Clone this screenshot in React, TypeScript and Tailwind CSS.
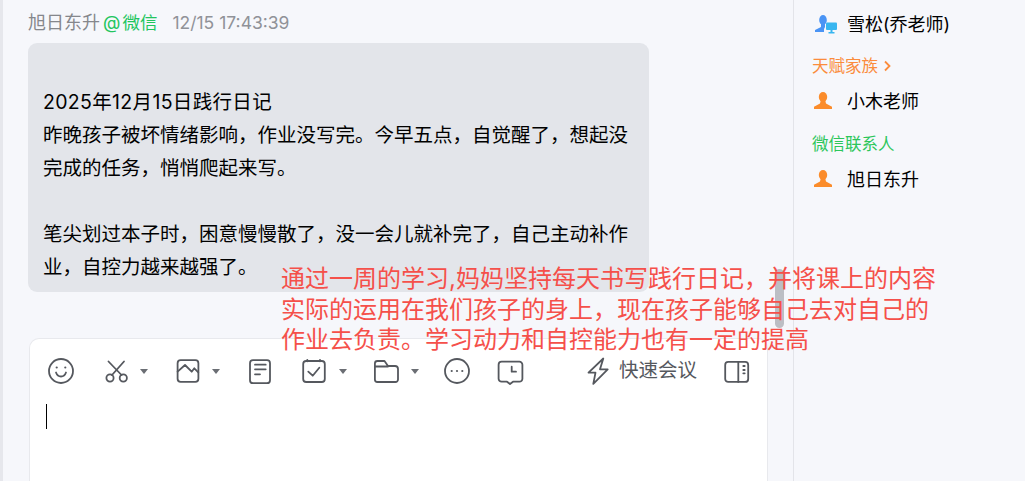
import React from 'react';

const cjk = { fontFamily: '"Inter", "Noto Sans CJK SC", sans-serif' };

const Ico: React.FC<{ children: React.ReactNode; className?: string }> = ({ children, className }) => (
  <svg width={28} height={28} viewBox="0 0 28 28" fill="none" stroke="#55585e" strokeWidth="1.8" strokeLinecap="round" strokeLinejoin="round" className={`shrink-0 ${className ?? ''}`}>
    {children}
  </svg>
);

const Caret: React.FC<{ className: string }> = ({ className }) => (
  <span className={`w-0 h-0 border-x-[4px] border-x-transparent border-t-[5px] border-t-[#6b6e74] ${className}`} />
);

const Person: React.FC = () => (
  <svg width="20" height="20" viewBox="0 0 20 20" fill="#fb8c2b">
    <ellipse cx="10" cy="6" rx="4.2" ry="5" />
    <path d="M7.6 10h4.8l.6 2.6 6 3.2V18H1v-2.2l6-3.2z" />
  </svg>
);

const App: React.FC = () => {
  return (
    <div className="relative w-[1025px] h-[481px] overflow-hidden flex bg-[#f6f7fb] text-black" style={cjk}>
      <div className="w-[3px] bg-[#e6e7ec]" />
      <main className="w-[790px] flex flex-col pl-[25px] pt-[10px]">
        <div className="flex items-center h-[26px] text-[18px] leading-[26px]">
          <span className="text-[#85878c]">旭日东升</span>
          <span className="ml-[3px] text-[#22c55e]">@</span>
          <span className="ml-[2px] text-[17.5px] text-[#22c55e]">微信</span>
          <span className="ml-[15px] text-[17.5px] text-[#909298]">12/15 17:43:39</span>
        </div>
        <div className="mt-[7px] w-[621px] h-[249px] rounded-[9px] bg-[#e3e5ea] px-[15px] pt-[43px] text-[19.5px] leading-[33px]">
          <p className="tracking-[0.33px]">2025年12月15日践行日记</p>
          <p>昨晚孩子被坏情绪影响，作业没写完。今早五点，自觉醒了，想起没完成的任务，悄悄爬起来写。</p>
          <p className="mt-[33px]">笔尖划过本子时，困意慢慢散了，没一会儿就补完了，自己主动补作业，自控力越来越强了。</p>
        </div>
        <div className="mt-[46px] ml-px w-[739px] flex-1 rounded-t-[10px] bg-white border border-b-0 border-[#e8e9ed] pl-[17px] pr-[16px] pt-[18px] min-h-0">
          <div className="flex items-center h-[28px]">
            <Ico>
              <circle cx="14" cy="14" r="12" />
              <path d="M9 15.500c1 2.800 2.800 4 5 4s4-1.200 5-4" />
              <circle cx="9.700" cy="10.500" r="1.100" fill="#55585e" stroke="none" />
              <circle cx="18.300" cy="10.500" r="1.100" fill="#55585e" stroke="none" />
            </Ico>
            <Ico className="ml-[28px]">
              <circle cx="7" cy="21" r="3.600" />
              <circle cx="20.300" cy="21" r="3.600" />
              <path d="M9 18 21 4.500M18.500 18 5.500 4.500" />
            </Ico>
            <Caret className="ml-[9px]" />
            <Ico className="ml-[26px]">
              <rect x="3.600" y="3.200" width="20.800" height="21.600" rx="3" />
              <path d="M3.600 14.700 11 8l6.700 6.700 2.600-3.400 4 4" />
            </Ico>
            <Caret className="ml-[10px]" />
            <Ico className="ml-[27px]">
              <rect x="3" y="3.200" width="20" height="23" rx="3" />
              <path d="M8 7.700h10.700M8 12.300h10.700M8 17.300h5" />
            </Ico>
            <Ico className="ml-[25px]">
              <rect x="3.200" y="4" width="21.600" height="21" rx="3" />
              <path d="M7.300 2.800v1.500M20 2.800v1.500M8.300 14.700l4.400 4 6.600-8" />
            </Ico>
            <Caret className="ml-[11px]" />
            <Ico className="ml-[25px]">
              <path d="M2.900 22.500V6.500A2.500 2.500 0 0 1 5.400 4h7.100l3.500 5h7a3 3 0 0 1 3 3v10.500a2.500 2.500 0 0 1-2.500 2.500H5.400a2.500 2.500 0 0 1-2.500-2.500zM2.900 9.500H16" />
            </Ico>
            <Caret className="ml-[11px]" />
            <Ico className="ml-[24px]">
              <circle cx="14" cy="14" r="12" />
              <circle cx="8.700" cy="14" r="1.100" fill="#55585e" stroke="none" />
              <circle cx="14" cy="14" r="1.100" fill="#55585e" stroke="none" />
              <circle cx="19.300" cy="14" r="1.100" fill="#55585e" stroke="none" />
            </Ico>
            <Ico className="ml-[25px]">
              <path d="M5.600 4.700h17.800a3 3 0 0 1 3 3v14a3 3 0 0 1-3 3H17l-3 2.300-3-2.300H5.600a3 3 0 0 1-3-3v-14a3 3 0 0 1 3-3z" />
              <path d="M15.700 9.700v5H20" />
            </Ico>
            <Ico className="ml-auto">
              <path d="M19.300 1.500 4.500 15.700h7L9.300 26.800l14.400-14.500h-7.700z" />
            </Ico>
            <span className="ml-[7px] text-[19.5px] text-[#55585e] whitespace-nowrap">快速会议</span>
            <Ico className="ml-[26px]">
              <rect x="2.200" y="4.900" width="23" height="20" rx="3" />
              <path d="M15.300 4.900v20M20.300 9h1.400M20.300 13h1.400M20.300 16.300h1.400" />
            </Ico>
          </div>
          <div className="mt-[19px] -ml-px w-px h-[25px] bg-black" />
        </div>
      </main>
      <aside className="w-[232px] border-l border-[#e3e4e9] pl-[18px] pt-[10px]">
        <div className="flex items-center h-[28px] text-[18px]">
          <span className="w-[33px] ml-[2px]">
            <svg width="24" height="22" viewBox="0 0 24 22">
              <ellipse cx="9" cy="7" rx="3.800" ry="5" fill="#4a94f5" />
              <path d="M7 11h4v3l-1 2v3H1v-2l6-3z" fill="#4a94f5" />
              <rect x="12" y="9.500" width="11" height="7.500" rx="1" fill="#38b6f0" />
              <path d="M16.500 17h2v2h2v1.500h-6V19h2z" fill="#38b6f0" />
            </svg>
          </span>
          <span>雪松(乔老师)</span>
        </div>
        <div className="mt-[16px] h-[24px] flex items-center text-[16.5px] text-[#fb8c3c]">
          天赋家族
          <svg width="10" height="12" viewBox="0 0 10 12" fill="none" stroke="#fb8c3c" strokeWidth="1.800" className="ml-[4px]"><path d="m3 1.500 4.500 4.500L3 10.500" /></svg>
        </div>
        <div className="mt-[9px] flex items-center h-[28px] text-[18px]">
          <span className="w-[34px] ml-px"><Person /></span>
          <span>小木老师</span>
        </div>
        <div className="mt-[17px] h-[24px] flex items-center text-[16.5px] text-[#2cc65a]">微信联系人</div>
        <div className="mt-[9px] flex items-center h-[28px] text-[18px]">
          <span className="w-[34px] ml-px"><Person /></span>
          <span>旭日东升</span>
        </div>
      </aside>
      {/* scrollbar thumb over the message list */}
      <div className="absolute left-[775px] top-[269px] w-[9px] h-[59px] rounded-full bg-[#bcbec4]" />
      {/* red annotation pasted on top of the screenshot */}
      <div className="absolute left-[281px] top-[264px] w-[670px] text-[24px] leading-[30.5px] text-[#f5504a]">
        <p>通过一周的学习,妈妈坚持每天书写践行日记，并将课上的内容</p>
        <p>实际的运用在我们孩子的身上，现在孩子能够自己去对自己的</p>
        <p>作业去负责。学习动力和自控能力也有一定的提高</p>
      </div>
    </div>
  );
};

export default App;
